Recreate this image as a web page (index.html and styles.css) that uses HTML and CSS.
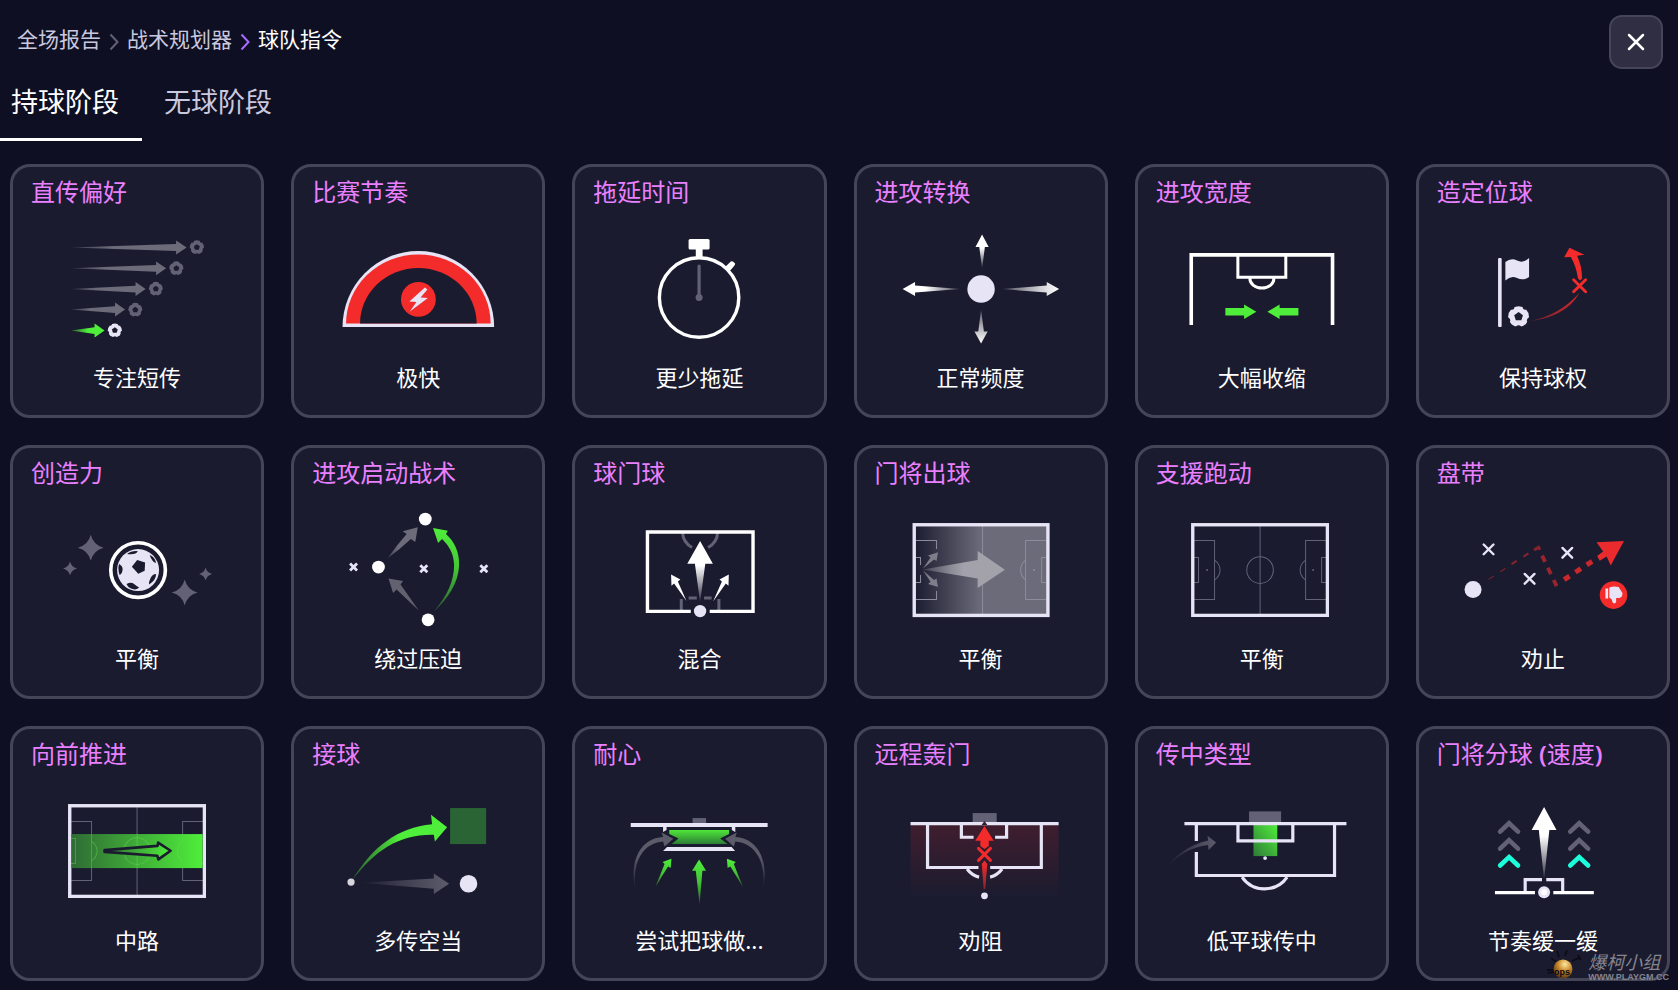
FILE: index.html
```html
<!DOCTYPE html>
<html lang="zh-CN">
<head>
    <meta charset="UTF-8">
    <meta name="viewport" content="width=device-width, initial-scale=1.0">
    <title>球队指令</title>
    <link rel="stylesheet" href="styles.css">
</head>
<body>
    <!-- 公用图形 -->
    <svg class="defs" width="0" height="0" aria-hidden="true">
        <defs>
            <linearGradient id="gray-r"><stop offset="0" stop-color="#6c6b7a" stop-opacity="0.4"/><stop offset="0.35" stop-color="#6c6b7a"/></linearGradient>
            <linearGradient id="gray-slow"><stop offset="0" stop-color="#6c6b7a" stop-opacity="0"/><stop offset="1" stop-color="#5c5b6b"/></linearGradient>
            <linearGradient id="green-r"><stop offset="0" stop-color="#2f6b35"/><stop offset="1" stop-color="#4fee3a"/></linearGradient>
            <linearGradient id="green-fade"><stop offset="0" stop-color="#4fee3a" stop-opacity="0.3"/><stop offset="0.5" stop-color="#4fee3a"/></linearGradient>
            <linearGradient id="green-up" x1="0" y1="1" x2="0" y2="0"><stop offset="0" stop-color="#4fee3a" stop-opacity="0.3"/><stop offset="0.5" stop-color="#4fee3a" stop-opacity="0.8"/><stop offset="1" stop-color="#4fee3a"/></linearGradient>
            <linearGradient id="green-box" x1="0" y1="1" x2="1" y2="0"><stop offset="0" stop-color="#2f7b38"/><stop offset="1" stop-color="#4fee3a"/></linearGradient>
            <linearGradient id="green-down" x1="0" y1="0" x2="0" y2="1"><stop offset="0" stop-color="#4fe63a"/><stop offset="1" stop-color="#2d7d36"/></linearGradient>
            <linearGradient id="white-r"><stop offset="0" stop-color="#fff" stop-opacity="0.2"/><stop offset="0.75" stop-color="#dcdce0"/><stop offset="1" stop-color="#fff"/></linearGradient>
            <linearGradient id="white-l"><stop offset="0.4" stop-color="#fff"/><stop offset="1" stop-color="#fff" stop-opacity="0.2"/></linearGradient>
            <linearGradient id="white-up" x1="0" y1="1" x2="0" y2="0"><stop offset="0" stop-color="#fff" stop-opacity="0.1"/><stop offset="0.6" stop-color="#fff"/></linearGradient>
            <linearGradient id="white-down" x1="0" y1="0" x2="0" y2="1"><stop offset="0" stop-color="#fff" stop-opacity="0.3"/><stop offset="1" stop-color="#fff"/></linearGradient>
            <linearGradient id="shade" x1="0" x2="1"><stop offset="0" stop-color="#6c6b7a" stop-opacity="0"/><stop offset="0.5" stop-color="#6c6b7a"/></linearGradient>
            <linearGradient id="red-down" x1="0" y1="0" x2="0" y2="1"><stop offset="0" stop-color="#f42b2b" stop-opacity="0.17"/><stop offset="1" stop-color="#f42b2b" stop-opacity="0"/></linearGradient>
            <linearGradient id="red-up" x1="0" y1="1" x2="0" y2="0"><stop offset="0" stop-color="#f42b2b" stop-opacity="0.5"/><stop offset="1" stop-color="#f42b2b"/></linearGradient>
            <linearGradient id="red-r"><stop offset="0" stop-color="#f42b2b" stop-opacity="0.45"/><stop offset="1" stop-color="#f42b2b" stop-opacity="0.8"/></linearGradient>
            <radialGradient id="bulb" cx="0.6" cy="0.25" r="0.8"><stop offset="0" stop-color="#ffe9a0"/><stop offset="0.45" stop-color="#c9892c"/><stop offset="1" stop-color="#4a2c12"/></radialGradient>
        </defs>
        <symbol id="ball" viewBox="-10 -10 20 20">
            <circle r="9" fill="currentColor"/>
            <g fill="#1a1b2f">
                <path d="M0-4 3.8-1.2 2.4 3.2H-2.4L-3.8-1.2z"/>
                <circle cx="5.9" cy="-8.1" r="2.2"/><circle cx="9.5" cy="3.1" r="2.2"/><circle cx="0" cy="10" r="2.4"/><circle cx="-9.5" cy="3.1" r="2.2"/><circle cx="-5.9" cy="-8.1" r="2.2"/>
            </g>
        </symbol>
        <symbol id="cross" viewBox="-6 -6 12 12">
            <path d="M-4.5-4.5 4.5 4.5M4.5-4.5-4.5 4.5" fill="none" stroke="currentColor" stroke-width="2.2" stroke-linecap="round"/>
        </symbol>
        <symbol id="star" viewBox="-10 -10 20 20">
            <path d="M0-10Q2-2 10 0 2 2 0 10-2 2-10 0-2-2 0-10z" fill="#626175"/>
        </symbol>
        <symbol id="pitch" viewBox="0 0 138 94">
            <g fill="none" stroke="#62617a" stroke-width="1">
                <path d="M69 3V91M3 17.500H23.500V76.500H3M3 34.500H7.500V59.500H3M135 17.500H114.500V76.500H135M135 34.500H130.500V59.500H135"/>
                <path d="M23.500 37Q29 41 29 47T23.500 57M114.500 37Q109 41 109 47T114.500 57"/>
                <circle cx="69" cy="47" r="13.300"/>
            </g>
            <circle cx="16" cy="47" r="1" fill="#62617a"/><circle cx="122" cy="47" r="1" fill="#62617a"/>
            <rect x="1.700" y="1.700" width="134.600" height="90.600" fill="none" stroke="#e6e4f5" stroke-width="3.400"/>
        </symbol>
        <symbol id="chevrons" viewBox="0 0 26 52">
            <g fill="none" stroke="#626175" stroke-width="4.600" stroke-linecap="round">
                <path d="M4 13 13 4.500 22 13M4 30 13 21.500 22 30"/>
                <path d="M4 47 13 38.500 22 47" stroke="#1bffdc"/>
            </g>
        </symbol>
    </svg>

    <header class="top-bar">
        <nav class="breadcrumb" aria-label="位置">
            <a href="#">全场报告</a>
            <svg class="sep" viewBox="0 0 10 26" aria-hidden="true"><path d="M1.500 9.500 8.500 17 1.500 24.500"/></svg>
            <a href="#">战术规划器</a>
            <svg class="sep active" viewBox="0 0 10 26" aria-hidden="true"><path d="M1.500 9.500 8.500 17 1.500 24.500"/></svg>
            <span class="current">球队指令</span>
        </nav>
        <button class="close" aria-label="关闭">
            <svg viewBox="0 0 18 18" aria-hidden="true"><path d="M2 2 16 16M16 2 2 16"/></svg>
        </button>
    </header>

    <div class="tabs" role="tablist">
        <button class="tab active" role="tab" aria-selected="true">持球阶段</button>
        <button class="tab" role="tab" aria-selected="false">无球阶段</button>
    </div>

    <main class="cards">
        <button class="card">
            <span class="title">直传偏好</span>
            <svg viewBox="3 43 248 154" aria-hidden="true">
                <g fill="url(#gray-r)">
                    <path d="M61 83.500 166 80V76.500L176.500 83.500 166 90.500V87z"/>
                    <path d="M61 104.300 146 101V97.500L156 104.300 146 111.300V107.800z"/>
                    <path d="M61 125 125.500 121.700V118L135.500 125 125.500 132V128.500z"/>
                    <path d="M61 145.500 105 142.200V138.500L115 145.500 105 152.500V149z"/>
                </g>
                <path d="M61 166.500 84.500 163.200V159.500L94.500 166.500 84.500 173.500V170z" fill="url(#green-fade)"/>
                <g color="#626175">
                    <use href="#ball" x="179" y="75.500" width="15.500" height="15.500"/>
                    <use href="#ball" x="158.500" y="96.500" width="15.500" height="15.500"/>
                    <use href="#ball" x="138" y="117" width="15.500" height="15.500"/>
                    <use href="#ball" x="117.500" y="138" width="15.500" height="15.500"/>
                </g>
                <use href="#ball" x="97" y="158.500" width="15.500" height="15.500" color="#e6e4f5"/>
            </svg>
            <span class="value">专注短传</span>
        </button>

        <button class="card">
            <span class="title">比赛节奏</span>
            <svg viewBox="3 43 248 154" aria-hidden="true">
                <path d="M51.500 163A75.700 76 0 0 1 203 163z" fill="#e6e4f5"/>
                <path d="M55 159.500A72.200 69 0 0 1 199.500 159.500z" fill="#f42b2b"/>
                <path d="M69 159.500A58.200 55.500 0 0 1 185.500 159.500z" fill="#1a1b2f"/>
                <circle cx="127.300" cy="135.300" r="17.400" fill="#f42b2b"/>
                <path d="M133.800 123.300 136.300 125.300 129.500 133.500 136.800 134 118.800 147.300 125.300 138 118.300 137.500z" fill="#e6e4f5"/>
            </svg>
            <span class="value">极快</span>
        </button>

        <button class="card">
            <span class="title">拖延时间</span>
            <svg viewBox="3 43 248 154" aria-hidden="true">
                <circle cx="127" cy="133.400" r="39.700" fill="none" stroke="#fff" stroke-width="3.400"/>
                <rect x="116.500" y="75" width="21" height="10.500" rx="1.500" fill="#fff"/>
                <path d="M123.700 84H130.500V94H123.700zM153.500 102.500 159 97.200Q160.500 96.500 163 99.500 163.500 101 157 107.500z" fill="#fff"/>
                <path d="M127 102V133" stroke="#626175" stroke-width="3.200" stroke-linecap="round"/>
                <circle cx="127" cy="133.400" r="3.500" fill="#626175"/>
            </svg>
            <span class="value">更少拖延</span>
        </button>

        <button class="card">
            <span class="title">进攻转换</span>
            <svg viewBox="3 43 248 154" aria-hidden="true">
                <circle cx="127" cy="125" r="13.700" fill="#e6e4f5"/>
                <path d="M128 70.500 134.600 83H130.800L128 104.500 125.200 83H121.400z" fill="url(#white-up)"/>
                <path d="M127 179.500 133.600 167.300H129.800L127 146 124.200 167.300H120.400z" fill="url(#white-down)"/>
                <path d="M48.600 125 61 118V121.500L106 125 61 128.500V132z" fill="url(#white-l)"/>
                <path d="M205 125 192.600 118V121.500L148.600 125 192.600 128.500V132z" fill="url(#white-r)"/>
            </svg>
            <span class="value">正常频度</span>
        </button>

        <button class="card">
            <span class="title">进攻宽度</span>
            <svg viewBox="3 43 248 154" aria-hidden="true">
                <g fill="none" stroke="#fff">
                    <path d="M56.200 161V90.800H197.400V161" stroke-width="3.600"/>
                    <path d="M102.800 90V113.200H150.700V90M114.800 114.500A12 9.500 0 0 0 138.800 114.500" stroke-width="3"/>
                </g>
                <path d="M90.300 144H109V140.300L121.300 147.700 109 155V151.300H90.300zM163.300 144H144.500V140.300L132.300 147.700 144.500 155V151.300H163.300z" fill="#4fee3a"/>
            </svg>
            <span class="value">大幅收缩</span>
        </button>

        <button class="card">
            <span class="title">造定位球</span>
            <svg viewBox="3 43 248 154" aria-hidden="true">
                <rect x="82" y="94" width="3.600" height="69" rx="1" fill="#e6e4f5"/>
                <path d="M89.300 98Q95 93.500 101 96.500T113 94V113Q107 117 101 114T89.300 116.500z" fill="#e6e4f5"/>
                <use href="#ball" x="91" y="141" width="23" height="23" color="#e6e4f5"/>
                <path d="M153.300 83.700 168.300 90.700 161 91.700Q165.800 102 166 114.300L164 116.500 161.900 114.300Q160 102 154.700 93L148 93.300z" fill="#f42b2b"/>
                <use href="#cross" x="155.500" y="113.700" width="16" height="16" color="#f42b2b"/>
                <path d="M114.200 157Q144 151 163.500 128.500 160 135 155 140 140 154 114.200 157z" fill="url(#red-r)"/>
            </svg>
            <span class="value">保持球权</span>
        </button>

        <button class="card">
            <span class="title">创造力</span>
            <svg viewBox="3 43 248 154" aria-hidden="true">
                <use href="#star" x="67.700" y="89.700" width="26" height="26"/>
                <use href="#star" x="53" y="116.300" width="14" height="14"/>
                <use href="#star" x="161.600" y="134.300" width="26" height="26"/>
                <use href="#star" x="189" y="122.500" width="13" height="13"/>
                <circle cx="128" cy="125" r="27.300" fill="none" stroke="#fff" stroke-width="3.600"/>
                <circle cx="128" cy="125" r="21" fill="#e6e4f5"/>
                <g fill="#1a1b2f">
                    <path d="M127.100 115 135 117.300 134.600 125.700 128.200 128.700 121.800 121.700z"/>
                    <path d="M117 109Q121 105.500 127.500 106 127 108.500 123 109T117 109zM109 119Q113 121 112.500 125T109.500 130Q107.500 124 109 119zM116.500 139Q121 136.500 124 139T129 142.500Q127 145 122.500 144T116.500 139zM146 129Q146 135 139 139.500 138.500 137 140.500 133T146 129zM139.500 110Q145 112 146 118 142 117 139.500 110z"/>
                </g>
            </svg>
            <span class="value">平衡</span>
        </button>

        <button class="card">
            <span class="title">进攻启动战术</span>
            <svg viewBox="3 43 248 154" aria-hidden="true">
                <path d="M126.700 82.300 124.200 97 119.800 94Q108 105 96.300 113.500 105 101 115.600 89L111.700 86.300z" fill="url(#gray-r)"/>
                <path d="M97.400 133.300 112 136 109.500 139.300 127.700 165.300 105.500 144.500 102 148z" fill="#62616f"/>
                <path d="M142 83 156.700 85.700 154.900 89C164 97 168.300 108 168 120 167.500 138 157 153 142.700 166.700 156 151 163 136 163 120 162.500 108 158 101 151 94L147 98z" fill="url(#green-up)"/>
                <circle cx="134.200" cy="74" r="6.400" fill="#fff"/><circle cx="87.400" cy="122" r="6.400" fill="#fff"/><circle cx="137" cy="174.700" r="6.400" fill="#fff"/>
                <g stroke="#e6e4f5" stroke-width="2.800"><path d="M59 118.500 66 125.500M66 118.500 59 125.500M129.200 120.200 136.200 127.200M136.200 120.200 129.200 127.200M189.200 120.200 196.200 127.200M196.200 120.200 189.200 127.200"/></g>
            </svg>
            <span class="value">绕过压迫</span>
        </button>

        <button class="card">
            <span class="title">球门球</span>
            <svg viewBox="3 43 248 154" aria-hidden="true">
                <g fill="none" stroke="#626175" stroke-width="3">
                    <path d="M110.500 88Q111 97 120 102.500M145.500 88Q145 97 136 102.500M109.200 166V154M116.500 153H124.700M132 153H139.500M146.800 166V154"/>
                </g>
                <path d="M118.700 166.300H75.400V87H180.900V166.300H137.600" fill="none" stroke="#fff" stroke-width="3.400"/>
                <path d="M128 96 140.800 118.700H133.200L128 157 122.800 118.700H115.200z" fill="url(#white-up)"/>
                <path d="M99 129.300 108.300 134.300 105.800 136.500 114.400 156 102 138.500 99.400 140.700zM156.700 129.300 147.400 134.300 149.800 136.500 141 156.500 153.700 138.500 156.400 140.700z" fill="#fff"/>
                <circle cx="128" cy="166" r="6.200" fill="#e6e4f5"/>
            </svg>
            <span class="value">混合</span>
        </button>

        <button class="card">
            <span class="title">门将出球</span>
            <svg viewBox="3 43 248 154" aria-hidden="true">
                <rect x="60" y="80" width="134" height="90" fill="url(#shade)"/>
                <path d="M128.500 81V169M62 95.500H82.500V104M82.500 146V154.500H62M62 112.500H66.500V120M66.500 130V137.500H62M192 95.500H171.500V154.500H192M192 112.500H187.500V137.500H192M171.500 115Q166.500 119 166.500 125T171.500 135" fill="none" stroke="#8d8c9d" stroke-width="1"/>
                <circle cx="180" cy="125" r="1" fill="#8d8c9d"/>
                <path d="M69 124.500 123.600 115V106L150.800 124.600 123.600 143V133.500z" fill="url(#arrow-keeper)"/>
                <path d="M84 107.300 82.500 116 80 114.500 69 123.500 76.500 112.500 74 110.500zM84 142 82.500 133.300 80 135 69 125.500 76.500 136.700 74 139z" fill="#7e7d8a"/>
                <rect x="60.200" y="79.700" width="133.600" height="90.600" fill="none" stroke="#e6e4f5" stroke-width="3.400"/>
                <defs><linearGradient id="arrow-keeper"><stop offset="0" stop-color="#a3a2ab" stop-opacity="0.2"/><stop offset="0.5" stop-color="#a3a2ab"/></linearGradient></defs>
            </svg>
            <span class="value">平衡</span>
        </button>

        <button class="card">
            <span class="title">支援跑动</span>
            <svg viewBox="3 43 248 154" aria-hidden="true">
                <use href="#pitch" x="56" y="78" width="138" height="94"/>
            </svg>
            <span class="value">平衡</span>
        </button>

        <button class="card">
            <span class="title">盘带</span>
            <svg viewBox="3 43 248 154" aria-hidden="true">
                <circle cx="57" cy="144.300" r="8.500" fill="#e6e4f5"/>
                <g color="#e6e4f5"><use href="#cross" x="66" y="97.800" width="13" height="13"/><use href="#cross" x="107" y="127.200" width="13" height="13"/><use href="#cross" x="144.700" y="101.200" width="13" height="13"/></g>
                <g fill="none" stroke="#f42b2b">
                    <path d="M72.500 134.300 96 119" stroke-width="1" stroke-opacity="0.5" stroke-dasharray="6 8"/>
                    <path d="M95.500 119 117 105.500" stroke-width="2" stroke-opacity="0.5" stroke-dasharray="6 8"/>
                    <path d="M118 105 122.500 102.300 124 104.500" stroke-width="3" stroke-opacity="0.5"/>
                    <path d="M126 110.500 140.500 141" stroke-width="3.800" stroke-opacity="0.6" stroke-dasharray="7 6.500"/>
                    <path d="M148 134.500 181 113" stroke-width="5" stroke-opacity="0.8" stroke-dasharray="6.500 7"/>
                </g>
                <path d="M207.800 96 194.600 120.300 190.500 111.500 183.600 115.700 181 111 187 106.500 180.400 97.300z" fill="#ea2b2d"/>
                <circle cx="197.400" cy="150" r="13.800" fill="#f42b2b"/>
                <path d="M189.300 143.500H192V153.300H189.300zM193.200 142.500Q198 140.500 202.500 142L206.300 148Q206.500 152.500 203 153H200V157Q198.500 159.500 196.500 157.500L195.700 154.500 193.200 152.300z" fill="#e6e4f5"/>
            </svg>
            <span class="value">劝止</span>
        </button>

        <button class="card">
            <span class="title">向前推进</span>
            <svg viewBox="3 43 248 154" aria-hidden="true">
                <use href="#pitch" x="58" y="78" width="138" height="94"/>
                <rect x="61.500" y="108" width="131" height="34" fill="url(#green-r)"/>
                <g fill="none" stroke="#6ee05c" stroke-opacity="0.4"><path d="M127 108V142M81.500 108V142M61.500 112.500H65.500V137.500H61.500M81.500 115Q87 119 87 125T81.500 135M172.500 115Q167 119 167 125T172.500 135"/><circle cx="127" cy="125" r="13.300"/></g>
                <path d="M94.500 124 147.500 119.800 148 116.500 160.500 124.700 148.300 133.300 147.300 129.700 94.500 125.800z" fill="url(#green-r)" stroke="#1a1b2f" stroke-width="2.600" stroke-linejoin="round"/>
            </svg>
            <span class="value">中路</span>
        </button>

        <button class="card">
            <span class="title">接球</span>
            <svg viewBox="3 43 248 154" aria-hidden="true">
                <rect x="159" y="82" width="36" height="36" fill="#2b6434"/>
                <path d="M60.600 155C82 120 106 102 141 98.300L139.900 88.700 156 101.300 143.800 115.300 142.700 108.700C108 108 84 124 60.600 155z" fill="url(#green-fade)"/>
                <path d="M68.800 156.700 142.700 152.300V147.300L158 157.700 142.700 168V162.700z" fill="url(#gray-slow)"/>
                <circle cx="60" cy="156" r="3.600" fill="#d8d6dc"/>
                <circle cx="177.400" cy="157.700" r="8.800" fill="#e6e4f5"/>
            </svg>
            <span class="value">多传空当</span>
        </button>

        <button class="card">
            <span class="title">耐心</span>
            <svg viewBox="3 43 248 154" aria-hidden="true">
                <rect x="120.500" y="92" width="13.500" height="5" fill="#626175"/>
                <path d="M58.700 97H195.500V101H58.700zM91 101H94.500V104L91 106zM159.700 101H163.200V106L159.700 104zM95 121H159.500L163 124.800H91z" fill="#e6e4f5"/>
                <path d="M97.200 104H157V108L148 112.500 155.500 118H99.500L106.500 112.500 97.200 108z" fill="url(#green-down)"/>
                <g id="patient-side">
                    <path d="M101.200 112.700 92.500 120.500 91 115.500C72 117 60 134 63.300 163 57 134 69 112 91 111L89.500 106.500z" fill="url(#gray-up)"/>
                    <path d="M99.400 132.700 98.700 142 96 140.500 83.300 161 92.500 138 90.500 136z" fill="url(#green-up)"/>
                </g>
                <use href="#patient-side" transform="matrix(-1 0 0 1 254.200 0)"/>
                <path d="M127 133.300 134 144.700H130.300L127.500 178 123.700 144.700H120z" fill="url(#green-up)"/>
                <defs><linearGradient id="gray-up" x1="0" y1="1" x2="0" y2="0"><stop offset="0" stop-color="#5c5b69" stop-opacity="0.1"/><stop offset="0.6" stop-color="#5c5b69"/></linearGradient></defs>
            </svg>
            <span class="value">尝试把球做...</span>
        </button>

        <button class="card">
            <span class="title">远程轰门</span>
            <svg viewBox="3 43 248 154" aria-hidden="true">
                <rect x="56.500" y="99" width="148" height="75" fill="url(#red-down)"/>
                <rect x="118.600" y="87" width="24" height="9" fill="#626175"/>
                <g fill="none" stroke="#e6e4f5" stroke-width="3.200">
                    <path d="M56.500 97.500H204.500M124.400 141.400H73.500V99M136.100 141.400H187.200V99M119.500 111.200H107.300V99M141 111.200H152.500V99"/>
                    <path d="M113 143Q118 149.500 125 151M148 143Q143 149.500 136 151"/>
                </g>
                <path d="M130.400 100 139.600 114.700H134.700V120L130.400 123 126.300 120V114.700H121.200z" fill="#f42b2b"/>
                <path d="M127.500 99H133.300L130.400 95z" fill="#35202f"/>
                <use href="#cross" x="122.400" y="120.300" width="16" height="16" color="#f42b2b"/>
                <path d="M130.400 134.500 133.200 138 131.200 163H129.600L127.700 138z" fill="url(#red-up)"/>
                <circle cx="130.400" cy="169.700" r="3.400" fill="#e6e4f5"/>
            </svg>
            <span class="value">劝阻</span>
        </button>

        <button class="card">
            <span class="title">传中类型</span>
            <svg viewBox="3 43 248 154" aria-hidden="true">
                <rect x="114" y="85.300" width="32" height="11" fill="#626175"/>
                <rect x="118.400" y="99" width="23.800" height="31" fill="url(#green-box)"/>
                <g fill="none" stroke="#e6e4f5" stroke-width="3.200">
                    <path d="M49.400 97.500H211.300M102.900 99V114.700H157.700V99M61.300 99V115M61.300 126V149.400H199.400V99"/>
                    <path d="M107 151Q115 162.700 129.500 162.700T152 151"/>
                </g>
                <circle cx="130" cy="132" r="1.900" fill="#e6e4f5"/>
                <path d="M30.500 143Q46 121 73 114.500L72.500 109.700 81 116.300 73.600 124 73 119Q48 122 30.500 143z" fill="url(#gray-slow)"/>
            </svg>
            <span class="value">低平球传中</span>
        </button>

        <button class="card">
            <span class="title">门将分球<b> (</b>速度<b>)</b></span>
            <svg viewBox="3 43 248 154" aria-hidden="true">
                <use href="#chevrons" x="79.800" y="92" width="26" height="52"/>
                <use href="#chevrons" x="150.300" y="92" width="26" height="52"/>
                <path d="M128 80.300 140.500 103.300H133.300L128 153 122.700 103.300H115.500z" fill="url(#white-up)"/>
                <g fill="none" stroke-width="3.200">
                    <path d="M109 166V153.300H125.900M130.200 153.300H146.700V166" stroke="#e6e4f5"/>
                    <path d="M78.600 166.300H118.800M137.300 166.300H178" stroke="#fff"/>
                </g>
                <circle cx="128" cy="166" r="6" fill="#e6e4f5"/><circle cx="128" cy="166" r="3" fill="#fff"/>
            </svg>
            <span class="value">节奏缓一缓</span>
        </button>
    </main>

    <div class="watermark">
        <svg viewBox="0 0 36 34" aria-hidden="true">
            <path d="M5 9 10 13M11 2 13 8M21 1 19 7M26 12 33 9M32 6 35 11M1 21H8M2 24 8 23" stroke="#0a0a14" stroke-width="1.500"/>
            <circle cx="17" cy="20" r="9.500" fill="url(#bulb)"/>
            <text x="8" y="26">ops</text>
        </svg>
        <div class="watermark-text">
            <span class="name">爆柯小组</span>
            <span class="site">WWW.PLAYGM.CC</span>
        </div>
    </div>
</body>
</html>
```
FILE: styles.css
```css
* {
    box-sizing: border-box;
}

body {
    margin: 0;
    position: relative;
    background-color: #0e0f23;
    color: #fff;
    font-family: "Noto Sans CJK SC", "Noto Sans", sans-serif;
}

button {
    font: inherit;
    color: inherit;
    cursor: pointer;
}

.defs {
    position: absolute;
}

/* 顶部导航 */
.top-bar {
    display: flex;
    justify-content: space-between;
    align-items: flex-start;
    padding: 15px 15px 0 17px;
}

.breadcrumb {
    display: flex;
    align-items: center;
    gap: 8px;
    height: 46px;
    font-size: 21px;
}

.breadcrumb a {
    color: #c9c8de;
    text-decoration: none;
}

.sep {
    width: 10px;
    height: 26px;
    fill: none;
    stroke: #626175;
    stroke-width: 2;
}

.sep.active {
    stroke: #a66cff;
}

.close {
    display: flex;
    align-items: center;
    justify-content: center;
    width: 54px;
    height: 54px;
    padding: 0;
    border: 2px solid #46465a;
    border-radius: 13px;
    background-color: #2f2e43;
}

.close svg {
    width: 18px;
    height: 18px;
    stroke: #fff;
    stroke-width: 2.5;
    stroke-linecap: round;
}

/* 阶段切换 */
.tabs {
    display: flex;
    gap: 11px;
}

.tab {
    padding: 12px 23px 17px 11px;
    border: 0;
    border-bottom: 3px solid transparent;
    background: none;
    color: #c9c8de;
    font-size: 27px;
    line-height: 40px;
}

.tab.active {
    border-bottom-color: #fff;
    color: #fff;
}

/* 指令卡片 */
.cards {
    display: grid;
    grid-template-columns: repeat(6, minmax(0, 1fr));
    gap: 27px;
    padding: 23px 8px 10px 10px;
}

.card {
    display: flex;
    flex-direction: column;
    aspect-ratio: 1;
    padding: 8px 0 24px;
    border: 3px solid #454558;
    border-radius: 20px;
    background-color: #1a1b2f;
}

.card:hover {
    border-color: #626175;
}

.card svg {
    flex: 1;
    width: 100%;
    min-height: 0;
}

.title {
    padding: 0 18px;
    color: #ea80ff;
    font-size: 24px;
    line-height: 32px;
    text-align: left;
}

.title b {
    font-family: "Noto Sans", sans-serif;
    font-weight: 600;
}

.value {
    font-size: 22px;
    line-height: 30px;
    text-align: center;
}

/* 水印 */
.watermark {
    position: absolute;
    right: 9px;
    bottom: 8px;
    display: flex;
    align-items: flex-end;
    gap: 6px;
    color: #85858f;
    pointer-events: none;
}

.watermark svg {
    width: 36px;
    height: 34px;
}

.watermark text {
    font: bold 9px "Liberation Sans", sans-serif;
    fill: #0a0a14;
}

.watermark-text {
    display: flex;
    flex-direction: column;
}

.name {
    font-size: 18px;
    font-style: italic;
    line-height: 20px;
}

.site {
    font-family: "Liberation Sans", sans-serif;
    font-size: 9px;
    font-weight: bold;
    line-height: 12px;
}
```
